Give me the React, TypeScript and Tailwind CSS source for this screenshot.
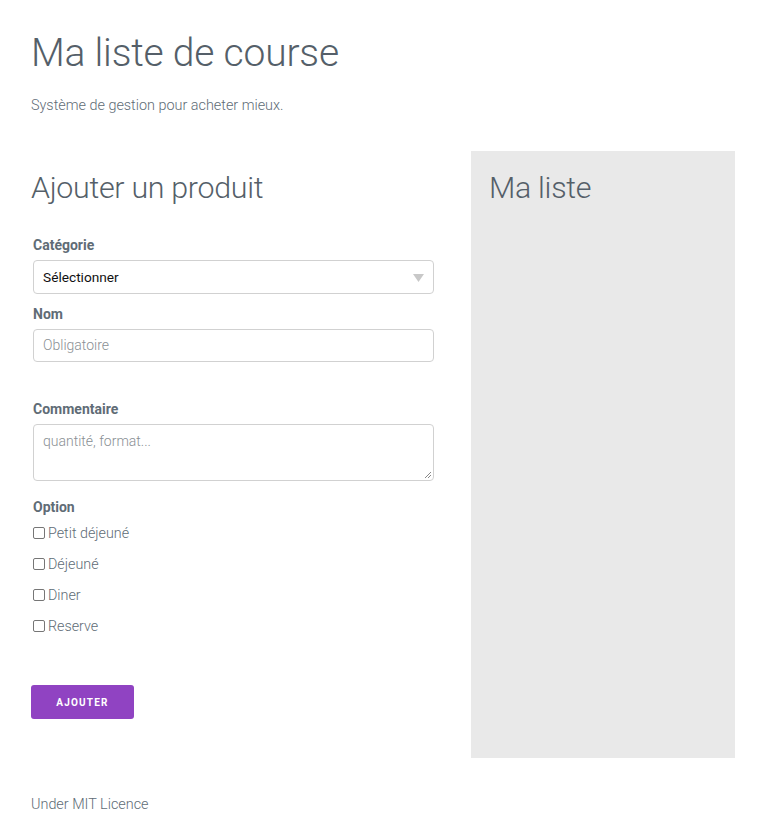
import React from "react";

export default function App() {
  const font = { fontFamily: "Roboto, 'Noto Sans', sans-serif" };
  return (
    <div className="min-h-[824px] bg-white text-[#606c76]" style={font}>
      <div className="pl-[31px] pr-[23px] pt-[28px]">
        <h1 className="text-[39px] font-light leading-[50px] tracking-[-0.2px] text-[#555f69]">Ma liste de course</h1>
        <p className="mt-[18px] text-[14.4px] font-light leading-[20px]">Système de gestion pour acheter mieux.</p>

        <div className="mt-[35px] flex">
          <div className="w-[403px] pl-[2px]">
            <h2 className="-ml-[2px] mt-[17px] text-[30.4px] font-light leading-[40px] tracking-[-0.3px] text-[#555f69]">Ajouter un produit</h2>
            <form className="mt-[27px]">
              <label className="block text-[14px] font-bold leading-[20px]">Catégorie</label>
              <div className="relative mt-[5px] flex h-[34px] items-center rounded-[4px] border border-[#d1d1d1] px-[9px]">
                <span className="text-[13.7px] text-[#111]">Sélectionner</span>
                <svg className="absolute right-[9px] top-[13px]" width="11" height="8" viewBox="0 0 11 8">
                  <path d="M0 0 H11 L5.5 8 Z" fill="#c8c8c8" />
                </svg>
              </div>
              <label className="mt-[10px] block text-[14px] font-bold leading-[20px]">Nom</label>
              <div className="mt-[5px] flex h-[33px] items-center rounded-[4px] border border-[#d1d1d1] px-[9px]">
                <span className="text-[14px] font-light text-[#8a8f94]">Obligatoire</span>
              </div>
              <label className="mt-[37px] block text-[14px] font-bold leading-[20px]">Commentaire</label>
              <div className="relative mt-[5px] h-[57px] rounded-[4px] border border-[#d1d1d1] px-[9px] pt-[4px]">
                <span className="text-[14px] font-light text-[#8a8f94]">quantité, format...</span>
                <svg className="absolute bottom-[1px] right-[1px]" width="8" height="8" viewBox="0 0 8 8">
                  <path d="M7 1 L1 7 M7 4 L4 7" stroke="#888" strokeWidth="1" />
                </svg>
              </div>
              <label className="mt-[16px] block text-[14px] font-bold leading-[20px]">Option</label>
              <div className="mt-[6px] flex flex-col gap-[11px]">
                {["Petit déjeuné", "Déjeuné", "Diner", "Reserve"].map((t) => (
                  <div key={t} className="flex h-[20px] items-center gap-[3px]">
                    <span className="inline-block h-[12px] w-[12px] rounded-[2px] border border-[#767676] bg-white" />
                    <span className="text-[14.3px] font-light leading-[20px] text-[#606c76]">{t}</span>
                  </div>
                ))}
              </div>
            </form>
            <button className="-ml-[2px] mt-[49px] flex h-[34px] w-[103px] items-center justify-center rounded-[3px] bg-[#9043c2] text-[10px] font-bold tracking-[1.2px] text-white">
              AJOUTER
            </button>
          </div>
          <div className="ml-[37px] h-[607px] w-[264px] bg-[#e9e9e9] px-[18px] pt-[17px]">
            <h2 className="text-[30.4px] font-light leading-[40px] tracking-[-0.3px] text-[#555f69]">Ma liste</h2>
          </div>
        </div>

        <p className="mt-[37px] text-[14.4px] font-light leading-[20px]">Under MIT Licence</p>
      </div>
    </div>
  );
}
